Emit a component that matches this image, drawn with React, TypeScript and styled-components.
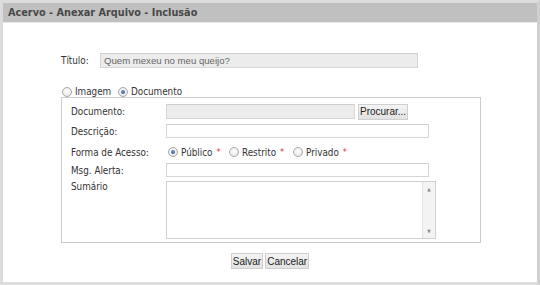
import React from "react";
import styled, { createGlobalStyle } from "styled-components";

const Global = createGlobalStyle`
  html, body { margin: 0; padding: 0; background: #fff; }
  * { box-sizing: border-box; }
`;

const Window = styled.div`
  width: 540px;
  height: 285px;
  border: 3px solid #dcdcdc;
  border-right-color: #cfcfcf;
  background: #fff;
  display: flex;
  flex-direction: column;
  font-family: "DejaVu Sans Condensed", "DejaVu Sans", Verdana, sans-serif;
`;

const Header = styled.div`
  height: 20px;
  background: #c0c0c0;
  border-bottom: 1px solid #e8e8e8;
  padding-left: 5px;
  display: flex;
  align-items: center;
  font-weight: bold;
  font-size: 10.8px;
  color: #484848;
`;

const Body = styled.div`
  flex: 1;
  padding: 30px 0 0 58px;
  display: flex;
  flex-direction: column;
`;

const Row = styled.div<{ $h: number; $mt?: number }>`
  display: flex;
  align-items: center;
  height: ${(p) => p.$h}px;
  margin-top: ${(p) => p.$mt ?? 0}px;
`;

const Label = styled.div<{ $w: number }>`
  width: ${(p) => p.$w}px;
  flex: none;
  font-size: 9.8px;
  color: #333;
`;

const Input = styled.div<{ $w: number; $h: number; $gray?: boolean }>`
  width: ${(p) => p.$w}px;
  height: ${(p) => p.$h}px;
  background: ${(p) => (p.$gray ? "#ececec" : "#fff")};
  border: 1px solid #d6d6d6;
  border-top-color: #cfcfcf;
  font-family: "Liberation Sans", Arial, sans-serif;
  font-size: 9.6px;
  color: #666;
  padding-left: 3px;
  display: flex;
  align-items: center;
`;

const Radios = styled.div<{ $ml?: number; $mt?: number }>`
  display: flex;
  align-items: center;
  height: 11px;
  margin-left: ${(p) => p.$ml ?? 0}px;
  margin-top: ${(p) => p.$mt ?? 0}px;
  font-size: 9.8px;
  color: #333;
`;

const RadioItem = styled.label<{ $w?: number }>`
  display: flex;
  align-items: center;
  width: ${(p) => (p.$w ? `${p.$w}px` : "auto")};
`;

const Radio = styled.span<{ $on?: boolean }>`
  width: 10px;
  height: 10px;
  border-radius: 50%;
  border: 1px solid #a8a8a8;
  background: radial-gradient(circle at 50% 40%, #fff 0%, #e8e8e8 80%);
  margin-right: 3px;
  position: relative;
  flex: none;
  &::after {
    content: "";
    display: ${(p) => (p.$on ? "block" : "none")};
    position: absolute;
    left: 2px;
    top: 2px;
    width: 4px;
    height: 4px;
    border-radius: 50%;
    background: radial-gradient(circle at 40% 35%, #6f9ad0, #27497a);
  }
`;

const Star = styled.span`
  color: #e03040;
  margin-left: 4px;
  font-size: 9px;
`;

const Fieldset = styled.div`
  width: 420px;
  height: 146px;
  border: 1px solid #cccccc;
  padding: 6px 0 0 9px;
  display: flex;
  flex-direction: column;
`;

const Btn = styled.div`
  height: 16px;
  padding: 0 1px;
  border: 1px solid #cfcfcf;
  background: linear-gradient(#f4f4f4, #e2e2e2);
  font-family: "Liberation Sans", Arial, sans-serif;
  font-size: 10px;
  color: #222;
  display: flex;
  align-items: center;
`;

const Spacer = styled.div`
  width: 3px;
`;

const Textarea = styled.div`
  width: 270px;
  height: 58px;
  border: 1px solid #d0d0d0;
  display: flex;
  justify-content: flex-end;
`;

const Scroll = styled.div`
  width: 13px;
  border-left: 1px solid #e4e4e4;
  background: #f3f3f3;
  display: flex;
  flex-direction: column;
  justify-content: space-between;
  align-items: center;
  padding: 4px 0;
  font-size: 5px;
  color: #888;
  line-height: 6px;
`;

const TopAlign = styled.div`
  display: flex;
  align-items: flex-start;
  margin-top: 4px;
`;

const Buttons = styled.div`
  display: flex;
  justify-content: center;
  gap: 2px;
  margin-top: 10px;
  margin-left: -58px;
`;

export default function App() {
  return (
    <>
      <Global />
      <Window>
        <Header>Acervo - Anexar Arquivo - Inclusão</Header>
        <Body>
          <Row $h={15}>
            <Label $w={39}>Título:</Label>
            <Input $w={318} $h={15} $gray>Quem mexeu no meu queijo?</Input>
          </Row>
          <Radios $ml={1} $mt={18}>
            <RadioItem $w={56}><Radio />Imagem</RadioItem>
            <RadioItem><Radio $on />Documento</RadioItem>
          </Radios>
          <Fieldset>
            <Row $h={15}>
              <Label $w={95}>Documento:</Label>
              <Input $w={189} $h={15} $gray />
              <Spacer />
              <Btn>Procurar...</Btn>
            </Row>
            <Row $h={14} $mt={5}>
              <Label $w={95}>Descrição:</Label>
              <Input $w={263} $h={14} />
            </Row>
            <Row $h={12} $mt={8}>
              <Label $w={97}>Forma de Acesso:</Label>
              <Radios>
                <RadioItem $w={61}><Radio $on />Público<Star>*</Star></RadioItem>
                <RadioItem $w={64}><Radio />Restrito<Star>*</Star></RadioItem>
                <RadioItem><Radio />Privado<Star>*</Star></RadioItem>
              </Radios>
            </Row>
            <Row $h={14} $mt={5}>
              <Label $w={95}>Msg. Alerta:</Label>
              <Input $w={263} $h={14} />
            </Row>
            <TopAlign>
              <Label $w={95}>Sumário</Label>
              <Textarea>
                <Scroll><span>▲</span><span>▼</span></Scroll>
              </Textarea>
            </TopAlign>
          </Fieldset>
          <Buttons>
            <Btn>Salvar</Btn>
            <Btn>Cancelar</Btn>
          </Buttons>
        </Body>
      </Window>
    </>
  );
}
